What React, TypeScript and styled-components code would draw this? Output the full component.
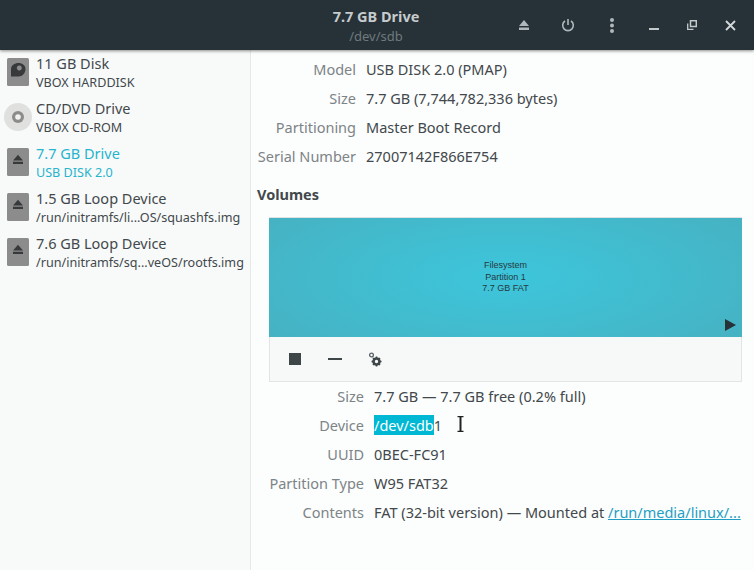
import styled, { createGlobalStyle } from "styled-components";

const drives = [
  { name: "11 GB Disk", sub: "VBOX HARDDISK", icon: "disk" },
  { name: "CD/DVD Drive", sub: "VBOX CD-ROM", icon: "cd" },
  { name: "7.7 GB Drive", sub: "USB DISK 2.0", icon: "usb", active: true },
  { name: "1.5 GB Loop Device", sub: "/run/initramfs/li...OS/squashfs.img", icon: "usb" },
  { name: "7.6 GB Loop Device", sub: "/run/initramfs/sq...veOS/rootfs.img", icon: "usb" },
];

function DriveIcon({ kind }: { kind: string }) {
  if (kind === "cd") {
    return (
      <svg width="28" height="28" viewBox="0 0 28 28">
        <circle cx="14" cy="14" r="14" fill="#e0e0de" />
        <circle cx="14" cy="14" r="6" fill="#8c8c8a" />
        <circle cx="14" cy="14" r="2.8" fill="#f2f2f0" />
      </svg>
    );
  }
  return (
    <svg width="22" height="28" viewBox="0 0 22 28">
      <rect width="22" height="28" rx="1.5" fill="#8c8c8c" />
      {kind === "disk" ? (
        <path d="M4 18.500V11C4 7.500 7.500 5 11.500 5C15.500 5 18.500 7.500 18.500 11C18.500 15 15.500 18.500 11.500 18.500Z M12.300 7.500a2.500 2.500 0 1 0 .01 0Z" fill="#37393b" fillRule="evenodd" />
      ) : (
        <path d="M11 6.700L16 12.500H6Z M6 13.800H16V16H6Z" fill="#37393b" />
      )}
    </svg>
  );
}

export default function App() {
  return (
    <>
      <GlobalStyle />
      <Window>
        <HeaderBar>
          <TitleBox>
            <Title>7.7 GB Drive</Title>
            <Subtitle>/dev/sdb</Subtitle>
          </TitleBox>
          <HeaderActions>
            <HeaderButton>
              <svg width="12" height="12" viewBox="0 0 12 12"><path d="M6 1L11 7H1Z M1 8.500H11V11H1Z" fill="#b0b8bb" /></svg>
            </HeaderButton>
            <HeaderButton>
              <svg width="14" height="14" viewBox="0 0 14 14" fill="none" stroke="#b0b8bb" strokeWidth="1.600"><path d="M7 1V7" /><path d="M4 3A5.300 5.300 0 1 0 10 3" /></svg>
            </HeaderButton>
            <HeaderButton>
              <svg width="4" height="15" viewBox="0 0 4 15"><circle cx="2" cy="2" r="2" fill="#b0b8bb" /><circle cx="2" cy="7.500" r="2" fill="#b0b8bb" /><circle cx="2" cy="13" r="2" fill="#b0b8bb" /></svg>
            </HeaderButton>
            <WindowButtons>
              <WindowButton>
                <svg width="10" height="10" viewBox="0 0 10 10"><rect y="8" width="10" height="2" fill="#c4cacc" /></svg>
              </WindowButton>
              <WindowButton>
                <svg width="10" height="10" viewBox="0 0 10 10" fill="none" stroke="#c4cacc" strokeWidth="1.300"><rect x="3.500" y=".7" width="5.800" height="5.800" strokeWidth="1.500" /><path d="M.7 3.500V9.300H6.500" /></svg>
              </WindowButton>
              <WindowButton>
                <svg width="11" height="11" viewBox="0 0 11 11" stroke="#d4d8da" strokeWidth="1.800"><path d="M1 1L10 10M10 1L1 10" /></svg>
              </WindowButton>
            </WindowButtons>
          </HeaderActions>
        </HeaderBar>
        <Body>
          <Sidebar>
            {drives.map((d) => (
              <DriveRow key={d.name}>
                <IconSlot><DriveIcon kind={d.icon} /></IconSlot>
                <DriveText $active={d.active}>
                  <DriveName>{d.name}</DriveName>
                  <DriveSub>{d.sub}</DriveSub>
                </DriveText>
              </DriveRow>
            ))}
          </Sidebar>
          <Main>
            <InfoGrid>
              <Label>Model</Label><Value>USB DISK 2.0 (PMAP)</Value>
              <Label>Size</Label><Value>7.7 GB (7,744,782,336 bytes)</Value>
              <Label>Partitioning</Label><Value>Master Boot Record</Value>
              <Label>Serial Number</Label><Value>27007142F866E754</Value>
            </InfoGrid>
            <SectionTitle>Volumes</SectionTitle>
            <VolumeBox>
              <VolumeMap>
                <VolumeCaption>Filesystem<br />Partition 1<br />7.7 GB FAT</VolumeCaption>
                <PlayMark />
              </VolumeMap>
              <VolumeToolbar>
                <ToolButton>
                  <svg width="12" height="12" viewBox="0 0 12 12"><rect width="12" height="12" fill="#3f4648" /></svg>
                </ToolButton>
                <ToolButton>
                  <svg width="14" height="2" viewBox="0 0 14 2"><rect width="14" height="2" fill="#3f4648" /></svg>
                </ToolButton>
                <ToolButton>
                  <svg width="14" height="15" viewBox="0 0 14 15">
                    <circle cx="3.500" cy="3" r="1.900" fill="none" stroke="#5a6164" strokeWidth="1.300" />
                    <circle cx="8.500" cy="9.500" r="3" fill="none" stroke="#3f4648" strokeWidth="2.600" />
                    <path d="M8.500 4.500V14.500M3.500 9.500H13.500M5 6L12 13M12 6L5 13" stroke="#3f4648" strokeWidth="1.500" strokeDasharray="1.500 7" />
                  </svg>
                </ToolButton>
              </VolumeToolbar>
            </VolumeBox>
            <VolumeGrid>
              <Label>Size</Label><Value>7.7 GB — 7.7 GB free (0.2% full)</Value>
              <Label>Device</Label>
              <Value>
                <Selected>/dev/sdb</Selected>1
                <Caret>
                  <svg width="7" height="16" viewBox="0 0 7 16" fill="none" stroke="#222" strokeWidth="1.200"><path d="M.5 .7H6.500M.5 15.300H6.500" /><path d="M3.500 .7V15.300" strokeWidth="2" /></svg>
                </Caret>
              </Value>
              <Label>UUID</Label><Value>0BEC-FC91</Value>
              <Label>Partition Type</Label><Value>W95 FAT32</Value>
              <Label>Contents</Label>
              <Value>FAT (32-bit version) — Mounted at <MountLink>/run/media/linux/...</MountLink></Value>
            </VolumeGrid>
          </Main>
        </Body>
      </Window>
    </>
  );
}

const GlobalStyle = createGlobalStyle`
  html, body {
    margin: 0;
    padding: 0;
    background: #fcfdfd;
    overflow: hidden;
  }
  * { box-sizing: border-box; }
`;

const Window = styled.div`
  width: 754px;
  height: 570px;
  display: flex;
  flex-direction: column;
  font-family: "Noto Sans", sans-serif;
  font-size: 14.5px;
  color: #42484b;
  overflow: hidden;
`;

const HeaderBar = styled.header`
  position: relative;
  z-index: 2;
  height: 50px;
  flex: none;
  background: #263238;
  box-shadow: 0 1px 3px rgba(0, 0, 0, 0.45);
  display: flex;
  align-items: center;
  justify-content: center;
`;

const TitleBox = styled.div`
  text-align: center;
  padding-top: 1px;
  margin-left: -2px;
`;

const Title = styled.div`
  color: #c6cbcd;
  font-weight: 700;
  font-size: 14.5px;
  line-height: 19px;
  margin-bottom: 1px;
`;

const Subtitle = styled.div`
  color: #70797d;
  font-size: 13px;
  line-height: 18px;
`;

const HeaderActions = styled.div`
  position: absolute;
  right: 0;
  top: 0;
  height: 50px;
  display: flex;
  align-items: center;
`;

const HeaderButton = styled.div`
  width: 44px;
  height: 50px;
  margin-left: -1px;
  margin-right: 1px;
  display: flex;
  align-items: center;
  justify-content: center;
`;

const WindowButtons = styled.div`
  display: flex;
  padding-right: 5px;
`;

const WindowButton = styled.div`
  width: 38px;
  height: 50px;
  display: flex;
  align-items: center;
  justify-content: center;
`;

const Body = styled.div`
  flex: 1;
  display: flex;
  min-height: 0;
`;

const Sidebar = styled.aside`
  width: 251px;
  flex: none;
  background: #f8fafa;
  border-right: 1px solid #e6e8e8;
  padding-top: 1px;
`;

const DriveRow = styled.div`
  height: 45px;
  display: flex;
  align-items: flex-start;
`;

const IconSlot = styled.div`
  width: 36px;
  flex: none;
  padding-top: 7px;
  display: flex;
  justify-content: center;
`;

const DriveText = styled.div<{ $active?: boolean }>`
  color: ${(p) => (p.$active ? "#27b4cd" : "#42484b")};
  padding-top: 1px;
`;

const DriveName = styled.div`
  font-size: 14.5px;
  line-height: 22px;
`;

const DriveSub = styled.div`
  font-size: 12.6px;
  line-height: 18px;
`;

const Main = styled.main`
  flex: 1;
  min-width: 0;
  padding: 4px 12px 0 6px;
`;

const InfoGrid = styled.div`
  display: grid;
  grid-template-columns: 99px 1fr;
  column-gap: 10px;
  grid-auto-rows: 29px;
  align-items: center;
`;

const VolumeGrid = styled(InfoGrid)`
  grid-template-columns: 95px 1fr;
  margin: -1px 0 0 12px;
`;

const Label = styled.div`
  color: #7d8487;
  text-align: right;
  white-space: nowrap;
`;

const Value = styled.div`
  color: #42484b;
  white-space: nowrap;
  position: relative;
`;

const SectionTitle = styled.div`
  font-weight: 700;
  margin-top: 14px;
  line-height: 20px;
`;

const VolumeBox = styled.div`
  margin: 13px 0 0 12px;
  width: 473px;
`;

const VolumeMap = styled.div`
  position: relative;
  height: 120px;
  background: radial-gradient(ellipse 62% 85% at 50% 50%, #3dc6dc 0%, #46b2c2 100%);
  border-top: 1px solid #dfe3e3;
  display: flex;
  align-items: center;
  justify-content: center;
`;

const VolumeCaption = styled.div`
  font-family: "Liberation Sans", sans-serif;
  font-size: 9px;
  line-height: 11.500px;
  color: #24393f;
  text-align: center;
`;

const PlayMark = styled.div`
  position: absolute;
  right: 6px;
  bottom: 6px;
  width: 0;
  height: 0;
  border-style: solid;
  border-width: 6px 0 6px 11px;
  border-color: transparent transparent transparent #263238;
`;

const VolumeToolbar = styled.div`
  height: 45px;
  background: #f7f8f8;
  border: 1px solid #e3e5e5;
  border-top: none;
  display: flex;
  align-items: center;
  padding-left: 5px;
`;

const ToolButton = styled.div`
  width: 40px;
  height: 44px;
  display: flex;
  align-items: center;
  justify-content: center;
`;

const Selected = styled.span`
  background: #00b8d4;
  color: #fff;
`;

const Caret = styled.span`
  position: absolute;
  left: 83px;
  top: 1px;
`;

const MountLink = styled.span`
  color: #1f9fc4;
  text-decoration: underline;
`;
